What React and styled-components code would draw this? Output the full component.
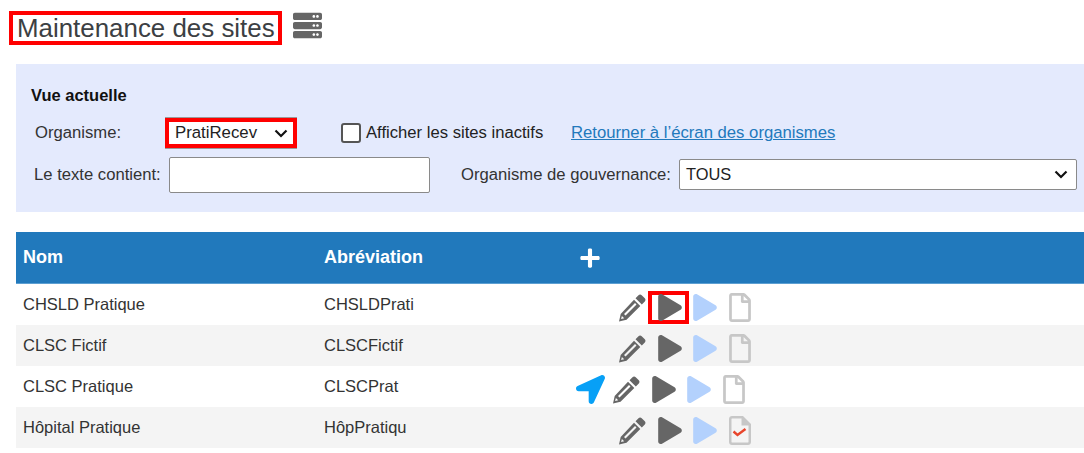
import React from 'react'
import styled, { createGlobalStyle } from 'styled-components'
import { FaPlay, FaPlus, FaServer, FaLocationArrow, FaRegFile } from 'react-icons/fa'

const GlobalStyle = createGlobalStyle`
  html, body {
    margin: 0;
    padding: 0;
    background: #fff;
  }
  body {
    font-family: "Liberation Sans", Arial, sans-serif;
    font-size: 16px;
    color: #333;
    overflow: hidden;
  }
`

const Page = styled.div`
  width: 1084px;
  height: 453px;
  padding: 11px 0 0 16px;
  box-sizing: border-box;
`

const TitleRow = styled.div`
  display: flex;
  align-items: center;
  height: 34px;
  margin-left: -7px;
  gap: 11px;
`

const Title = styled.h1`
  margin: 0;
  height: 34px;
  box-sizing: border-box;
  border: 4px solid #f00;
  padding: 0 3px 0 4px;
  font-size: 25.9px;
  font-weight: 400;
  line-height: 26px;
  color: #3c4043;
`

const ServerIcon = styled(FaServer)`
  width: 29px;
  height: 29px;
  color: #666;
  margin-top: -6px;
`

const Panel = styled.section`
  margin-top: 19px;
  height: 148px;
  box-sizing: border-box;
  background: #e4eafd;
  padding: 22px 7px 0 15px;
`

const PanelTitle = styled.div`
  font-size: 16.5px;
  font-weight: 700;
  line-height: 18px;
  color: #111;
`

const OrgRow = styled.div`
  display: flex;
  align-items: center;
  height: 30px;
  margin-top: 14px;
`

const GovRow = styled.div`
  display: flex;
  align-items: center;
  height: 36px;
  margin-top: 9px;
`

const Label = styled.label`
  display: inline-flex;
  align-items: center;
  width: ${({ $width }) => $width}px;
  padding-left: ${({ $indent }) => $indent || 0}px;
  box-sizing: border-box;
  flex: none;
  font-size: 16.65px;
  color: #333;
  white-space: nowrap;
`

const HighlightBox = styled.div`
  width: 132px;
  height: 30px;
  box-sizing: border-box;
  border: 4px solid #f00;
  background: #fff;
  box-shadow: 0 -1px 0 #9a9a9a, 0 1px 0 #9a9a9a;
  display: flex;
  align-items: center;
  justify-content: space-between;
  padding: 0 5px 0 6px;
  font-size: 16.8px;
  color: #222;
`

const Chevron = styled.svg`
  width: 14px;
  height: 9px;
  fill: none;
  stroke: #111;
  stroke-width: 2.2;
  flex: none;
`

const CheckLabel = styled.label`
  display: flex;
  align-items: center;
  gap: 5px;
  margin-left: 44px;
  width: 230px;
  font-size: 16.65px;
  color: #222;
  white-space: nowrap;
`

const CheckBox = styled.span`
  width: 20px;
  height: 20px;
  box-sizing: border-box;
  border: 2px solid #555;
  border-radius: 3px;
  background: #fff;
`

const BackLink = styled.a`
  font-size: 16.7px;
  color: #2279bc;
  text-decoration: underline;
  white-space: nowrap;
`

const TextInput = styled.div`
  width: 261px;
  height: 36px;
  box-sizing: border-box;
  background: #fff;
  border: 1px solid #8a8a8a;
  border-radius: 2px;
  margin-left: -1px;
`

const GovLabel = styled(Label)`
  margin-left: 31px;
`

const GovSelect = styled.div`
  flex: 1;
  height: 31px;
  margin: 0 0 2px -2px;
  box-sizing: border-box;
  background: #fff;
  border: 1px solid #8a8a8a;
  border-radius: 2px;
  display: flex;
  align-items: center;
  justify-content: space-between;
  padding: 0 8px 0 6px;
  font-size: 16.4px;
  color: #222;
`

const Table = styled.div`
  margin-top: 20px;
`

const columns = '301px 250px 1fr'

const HeaderRow = styled.div`
  display: grid;
  grid-template-columns: ${columns};
  align-items: center;
  height: 52px;
  box-sizing: border-box;
  background: #2179bc;
  border-bottom: 1px solid #5c9fd2;
  color: #fff;
  font-size: 18px;
  font-weight: 700;
`

const HeaderCell = styled.div`
  padding-left: 7px;
`

const AddIcon = styled(FaPlus)`
  display: block;
  width: 22px;
  height: 22px;
  margin-left: 12px;
  color: #fff;
`

const Row = styled.div`
  display: grid;
  grid-template-columns: ${columns};
  align-items: center;
  height: 41px;
  background: ${({ $striped }) => ($striped ? '#f4f4f4' : '#fff')};
  font-size: 16.5px;
  color: #333;
`

const Cell = styled.div`
  padding-left: 7px;
`

const Actions = styled.div`
  display: flex;
  align-items: center;
  height: 41px;
  box-sizing: border-box;
  padding-top: 6px;
  padding-left: ${({ $shifted }) => ($shifted ? 9 : 51)}px;
`

const Slot = styled.span`
  display: flex;
  align-items: center;
  justify-content: center;
  box-sizing: border-box;
  width: ${({ $width }) => $width}px;
  height: 33px;
`

const PlaySlot = styled(Slot)`
  margin-left: 2px;
  padding-left: 2px;
  border: ${({ $boxed }) => ($boxed ? '4px solid #f00' : 'none')};
`

const PlayIcon = styled(FaPlay)`
  width: 24px;
  height: 27px;
  flex: none;
  color: ${({ $active }) => ($active ? '#666' : '#b3d1fd')};
`

const NavIcon = styled(FaLocationArrow)`
  width: 29px;
  height: 29px;
  margin-right: 7px;
  flex: none;
  color: #07a0f6;
`

const FileIcon = styled(FaRegFile)`
  width: 22px;
  height: 29px;
  color: #c7c7c7;
`

const PencilSvg = styled.svg`
  width: 28px;
  height: 28px;
  color: #666;
`

const Pencil = () => (
  <PencilSvg viewBox="0 0 28 28">
    <path
      fill="currentColor"
      fillRule="evenodd"
      d="M20.500 1.200c.9-.9 2.300-.9 3.200 0l3.100 3.100c.9.9.9 2.300 0 3.200l-3 3L17.500 4.200zM16 5.700l6.300 6.300L8.500 25.800 1 27.500l1.700-7.500zM17 9 6 20l1.500 1.500 11-11zM3.900 21.900l-.8 3.100 3.100-.8z"
    />
  </PencilSvg>
)

const CheckedFile = () => (
  <svg width="22" height="29" viewBox="0 0 22 29">
    <path
      fill="#c7c7c7"
      fillRule="evenodd"
      d="M3 0h11l8 8v18c0 1.700-1.300 3-3 3H3c-1.700 0-3-1.300-3-3V3c0-1.700 1.300-3 3-3zm0 2.500c-.3 0-.5.2-.5.5v23c0 .3.200.5.500.5h16c.3 0 .5-.2.500-.5V9.500h-7V2.500z"
    />
    <path fill="none" stroke="#e8452c" strokeWidth="2.400" d="M4.500 15.500l4 3.500 8-6" />
  </svg>
)

const sites = [
  { name: 'CHSLD Pratique', abbr: 'CHSLDPrati', boxed: true },
  { name: 'CLSC Fictif', abbr: 'CLSCFictif' },
  { name: 'CLSC Pratique', abbr: 'CLSCPrat', nav: true },
  { name: 'Hôpital Pratique', abbr: 'HôpPratiqu', checked: true },
]

const DownChevron = () => (
  <Chevron viewBox="0 0 14 9">
    <path d="M1.500 1.500 7 7l5.500-5.500" />
  </Chevron>
)

export default function App() {
  return (
    <Page>
      <GlobalStyle />
      <TitleRow>
        <Title>Maintenance des sites</Title>
        <ServerIcon />
      </TitleRow>
      <Panel>
        <PanelTitle>Vue actuelle</PanelTitle>
        <OrgRow>
          <Label $width={134} $indent={4}>Organisme:</Label>
          <HighlightBox>
            PratiRecev
            <DownChevron />
          </HighlightBox>
          <CheckLabel>
            <CheckBox />
            Afficher les sites inactifs
          </CheckLabel>
          <BackLink href="#">Retourner à l’écran des organismes</BackLink>
        </OrgRow>
        <GovRow>
          <Label $width={139} $indent={3}>Le texte contient:</Label>
          <TextInput />
          <GovLabel $width={220}>Organisme de gouvernance:</GovLabel>
          <GovSelect>
            TOUS
            <DownChevron />
          </GovSelect>
        </GovRow>
      </Panel>
      <Table>
        <HeaderRow>
          <HeaderCell>Nom</HeaderCell>
          <HeaderCell>Abréviation</HeaderCell>
          <AddIcon />
        </HeaderRow>
        {sites.map((site, i) => (
          <Row key={site.name} $striped={i % 2 === 1}>
            <Cell>{site.name}</Cell>
            <Cell>{site.abbr}</Cell>
            <Actions $shifted={site.nav}>
              {site.nav && <Slot $width={36}><NavIcon /></Slot>}
              <Slot $width={28}><Pencil /></Slot>
              <PlaySlot $width={41} $boxed={site.boxed}><PlayIcon $active /></PlaySlot>
              <Slot $width={32}><PlayIcon /></Slot>
              <Slot $width={38}>{site.checked ? <CheckedFile /> : <FileIcon />}</Slot>
            </Actions>
          </Row>
        ))}
      </Table>
    </Page>
  )
}
